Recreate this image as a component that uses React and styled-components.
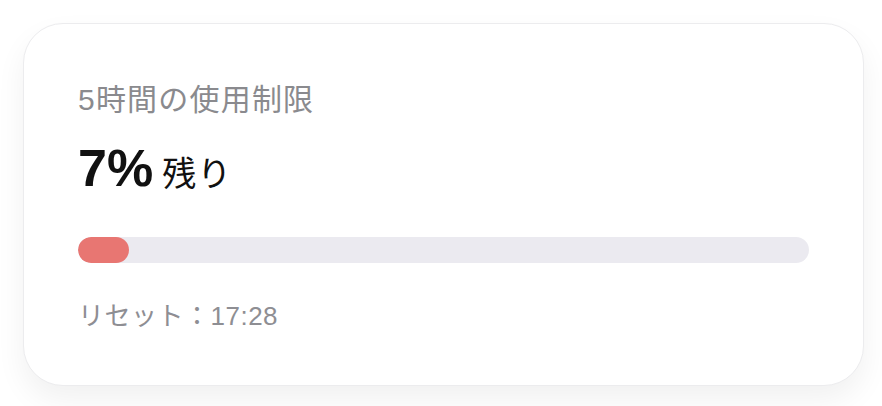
import React from "react";
import styled, { createGlobalStyle } from "styled-components";

const GlobalStyle = createGlobalStyle`
  * {
    box-sizing: border-box;
  }
  body {
    margin: 0;
    background: #ffffff;
    font-family: "Liberation Sans", "Noto Sans CJK JP", sans-serif;
  }
`;

const usage = {
  title: "5時間の使用制限",
  remaining: 7,
  reset: "17:28",
};

const App = () => {
  return (
    <>
      <GlobalStyle />
      <Page>
        <Card>
          <Title>{usage.title}</Title>
          <Amount>
            <Percent>{usage.remaining}%</Percent>
            <Suffix>残り</Suffix>
          </Amount>
          <Track>
            <Fill style={{ width: `${usage.remaining}%` }} />
          </Track>
          <Reset>リセット：{usage.reset}</Reset>
        </Card>
      </Page>
    </>
  );
};

const Page = styled.div`
  width: 882px;
  height: 406px;
  padding: 23px 18px 20px 23px;
`;

const Card = styled.div`
  display: flex;
  flex-direction: column;
  height: 363px;
  padding: 58px 54px 0 54px;
  background: #ffffff;
  border: 1px solid #ececee;
  border-radius: 40px;
  box-shadow: 0 14px 30px rgba(0, 0, 0, 0.06);
`;

const Title = styled.div`
  font-size: 30px;
  line-height: 36px;
  letter-spacing: 1.2px;
  color: #8a8a8e;
`;

const Amount = styled.div`
  display: flex;
  align-items: baseline;
  gap: 9px;
  margin-top: 22px;
  height: 56px;
  color: #111111;
`;

const Percent = styled.span`
  font-size: 52px;
  line-height: 56px;
  font-weight: 700;
`;

const Suffix = styled.span`
  font-size: 34px;
  line-height: 56px;
  letter-spacing: 1px;
  font-family: "Noto Sans CJK JP", sans-serif;
`;

const Track = styled.div`
  margin-top: 41px;
  height: 26px;
  border-radius: 13px;
  background: #ebeaf0;
  overflow: hidden;
`;

const Fill = styled.div`
  height: 100%;
  min-width: 26px;
  border-radius: 13px;
  background: #e87672;
`;

const Reset = styled.div`
  margin-top: 37px;
  font-size: 26px;
  line-height: 32px;
  letter-spacing: 0.5px;
  color: #8e8e93;
`;

export default App;
